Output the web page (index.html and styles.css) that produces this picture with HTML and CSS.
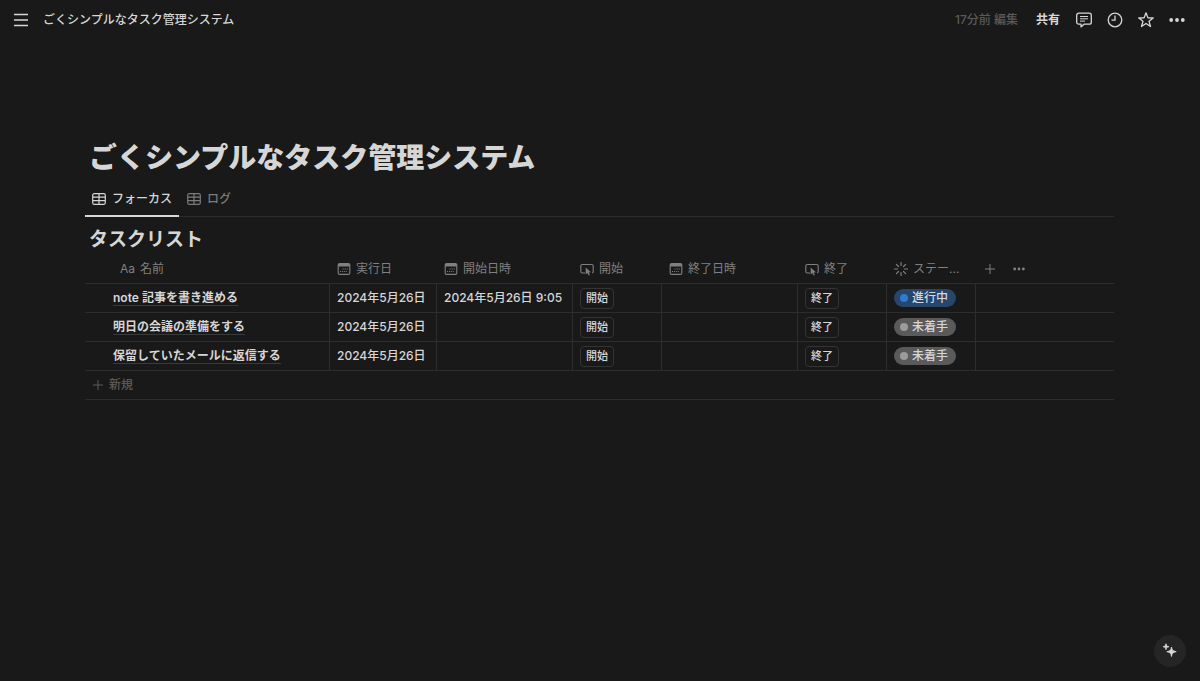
FILE: index.html
```html
<!DOCTYPE html>
<html lang="ja">
<head>
<meta charset="utf-8">
<meta name="viewport" content="width=device-width, initial-scale=1">
<title>ごくシンプルなタスク管理システム</title>
<link rel="stylesheet" href="styles.css">
</head>
<body>
<svg class="sprite" aria-hidden="true">
  <symbol id="i-table" viewBox="0 0 14 14"><path d="M2.200 1.700h9.600a1.500 1.500 0 0 1 1.500 1.500v7.600a1.500 1.500 0 0 1-1.500 1.500H2.200a1.500 1.500 0 0 1-1.500-1.500V3.200a1.500 1.500 0 0 1 1.500-1.500zM.7 5.200h12.600M.7 8.700h12.600M7 1.700v10.600" fill="none" stroke="currentColor" stroke-width="1.200"/></symbol>
  <symbol id="i-date" viewBox="0 0 14 14"><path d="M2.600 1.600h8.800a1.400 1.400 0 0 1 1.400 1.400v8a1.400 1.400 0 0 1-1.400 1.400H2.600A1.400 1.400 0 0 1 1.200 11V3a1.400 1.400 0 0 1 1.400-1.400z" fill="none" stroke="currentColor" stroke-width="1.100"/><path d="M1.200 2h11.600v2.500H1.200z" fill="currentColor"/><path d="M5.500 7h6M3 9.500h7" fill="none" stroke="currentColor" stroke-width="1.100" stroke-dasharray="1.100 1"/></symbol>
  <symbol id="i-button" viewBox="0 0 14 14"><path d="M5 11H2.300A1.500 1.500 0 0 1 .8 9.500V4a1.500 1.500 0 0 1 1.500-1.500h9.400A1.500 1.500 0 0 1 13.200 4v5.500a1.500 1.500 0 0 1-1 1.400" fill="none" stroke="currentColor" stroke-width="1.100"/><path d="M5.700 5.500v7l1.700-1.500 1.300 2.500 1.200-.6-1.200-2.500 2.200-.2z" fill="currentColor"/></symbol>
  <symbol id="i-status" viewBox="0 0 14 14"><path d="M7 .5v3M7 10.500v3M.5 7h3M10.500 7h3M2.400 2.400l2.100 2.100M9.500 9.500l2.100 2.100M2.400 11.600l2.100-2.100M9.500 4.500l2.100-2.100" fill="none" stroke="currentColor" stroke-width="1.200" stroke-linecap="round"/></symbol>
  <symbol id="i-plus" viewBox="0 0 12 12"><path d="M6 1v10M1 6h10" fill="none" stroke="currentColor"/></symbol>
  <symbol id="i-dots" viewBox="0 0 16 16"><circle cx="2.200" cy="8" r="1.900" fill="currentColor"/><circle cx="8" cy="8" r="1.900" fill="currentColor"/><circle cx="13.800" cy="8" r="1.900" fill="currentColor"/></symbol>
</svg>

<header class="topbar">
  <button class="icon-btn" aria-label="メニュー"><svg class="icon-16" viewBox="0 0 16 16"><path d="M1 2.500h14M1 8h14M1 13.500h14" stroke="currentColor" stroke-width="1.500"/></svg></button>
  <a class="crumb" href="#">ごくシンプルなタスク管理システム</a>
  <span class="edited">17分前 編集</span>
  <button class="share">共有</button>
  <nav class="actions" aria-label="ページ操作">
    <button class="icon-btn" aria-label="コメント"><svg class="icon-16" viewBox="0 0 16 16"><path d="M2.700 1.200h10.600a2 2 0 0 1 2 2v7a2 2 0 0 1-2 2H8l-3 2.700v-2.700H2.700a2 2 0 0 1-2-2v-7a2 2 0 0 1 2-2z" fill="none" stroke="currentColor" stroke-width="1.300" stroke-linejoin="round"/><path d="M4 4.500h8M4 6.800h8M4 9.100h5" stroke="currentColor"/></svg></button>
    <button class="icon-btn" aria-label="更新履歴"><svg class="icon-16" viewBox="0 0 16 16"><circle cx="8" cy="8" r="6.800" fill="none" stroke="currentColor" stroke-width="1.300"/><path d="M8 3.500V8.200H4.500" fill="none" stroke="currentColor" stroke-width="1.300"/></svg></button>
    <button class="icon-btn" aria-label="お気に入り"><svg class="icon-16" viewBox="0 0 16 16"><path d="M8 .8l1.900 5 5.300.2-4.200 3.300 1.500 5.200L8 11.500l-4.500 3 1.500-5.200L.8 6l5.300-.2z" fill="none" stroke="currentColor" stroke-width="1.300" stroke-linejoin="round"/></svg></button>
    <button class="icon-btn" aria-label="その他"><svg class="icon-16"><use href="#i-dots"/></svg></button>
  </nav>
</header>

<main class="page">
  <h1 class="title">ごくシンプルなタスク管理システム</h1>
  <div class="tabs" role="tablist">
    <button class="tab tab-active" role="tab" aria-selected="true"><svg class="icon-14"><use href="#i-table"/></svg>フォーカス</button>
    <button class="tab" role="tab" aria-selected="false"><svg class="icon-14"><use href="#i-table"/></svg>ログ</button>
  </div>
  <h2 class="subtitle">タスクリスト</h2>
  <table class="tasks">
    <colgroup><col class="c-name"><col class="c-day"><col class="c-time"><col class="c-btn"><col class="c-time"><col class="c-btn"><col class="c-btn"><col></colgroup>
    <thead>
      <tr>
        <th class="name-head"><span class="head"><span>Aa</span>名前</span></th>
        <th><span class="head"><svg class="icon-14"><use href="#i-date"/></svg>実行日</span></th>
        <th><span class="head"><svg class="icon-14"><use href="#i-date"/></svg>開始日時</span></th>
        <th><span class="head"><svg class="icon-14"><use href="#i-button"/></svg>開始</span></th>
        <th><span class="head"><svg class="icon-14"><use href="#i-date"/></svg>終了日時</span></th>
        <th><span class="head"><svg class="icon-14"><use href="#i-button"/></svg>終了</span></th>
        <th><span class="head"><svg class="icon-14"><use href="#i-status"/></svg>ステー...</span></th>
        <th><span class="head-tools"><button class="icon-btn" aria-label="列を追加"><svg class="icon-12"><use href="#i-plus"/></svg></button><button class="icon-btn" aria-label="列の設定"><svg class="icon-12"><use href="#i-dots"/></svg></button></span></th>
      </tr>
    </thead>
    <tbody>
      <tr>
        <td class="name"><a class="task" href="#">note 記事を書き進める</a></td><td>2024年5月26日</td><td>2024年5月26日 9:05</td>
        <td><button class="run">開始</button></td><td></td><td><button class="run">終了</button></td>
        <td><span class="status status-doing">進行中</span></td><td></td>
      </tr>
      <tr>
        <td class="name"><a class="task" href="#">明日の会議の準備をする</a></td><td>2024年5月26日</td><td></td>
        <td><button class="run">開始</button></td><td></td><td><button class="run">終了</button></td>
        <td><span class="status">未着手</span></td><td></td>
      </tr>
      <tr>
        <td class="name"><a class="task" href="#">保留していたメールに返信する</a></td><td>2024年5月26日</td><td></td>
        <td><button class="run">開始</button></td><td></td><td><button class="run">終了</button></td>
        <td><span class="status">未着手</span></td><td></td>
      </tr>
    </tbody>
  </table>
  <button class="new-row"><svg class="icon-12"><use href="#i-plus"/></svg>新規</button>
</main>

<button class="ai" aria-label="AI に質問"><svg class="icon-16" viewBox="0 0 16 16"><path d="M9.500 4c.5 3.200 1.200 4 4.700 4.700-3.500.7-4.200 1.500-4.700 4.800-.5-3.300-1.200-4.100-4.700-4.800C8.300 8 9 7.200 9.500 4zM4 .8c.3 2 .8 2.500 2.900 2.900C4.800 4.100 4.300 4.600 4 6.700 3.700 4.600 3.200 4.100 1.100 3.700 3.200 3.300 3.700 2.800 4 .8z" fill="currentColor" stroke="currentColor" stroke-width=".9"/></svg></button>
</body>
</html>
```

FILE: styles.css
```css
* { box-sizing: border-box; }

body {
  margin: 0;
  min-height: 100vh;
  background: #191919;
  color: #d6d6d6;
  font: 500 12px/18px Inter, "Noto Sans CJK JP", sans-serif;
}

button {
  display: inline-flex;
  align-items: center;
  margin: 0;
  padding: 0;
  border: 0;
  background: none;
  color: inherit;
  font: inherit;
}

a { color: inherit; text-decoration: none; }
svg { display: block; flex: none; }
.sprite { display: none; }
.icon-12 { width: 12px; height: 12px; }
.icon-14 { width: 14px; height: 14px; }
.icon-16 { width: 16px; height: 16px; }

.topbar {
  display: flex;
  align-items: center;
  height: 40px;
  padding: 0 15px 0 13px;
}
.crumb { margin-left: 14px; }
.edited { margin-left: auto; color: #5a5a5a; }
.share { margin-left: 18px; font-weight: 600; }
.actions { display: flex; gap: 15px; margin-left: 16px; }

.page { padding: 100px 86px 0 85px; }

.title {
  margin: 0;
  padding-left: 4px;
  font-size: 28px;
  line-height: 36px;
  font-weight: 800;
}

.tabs {
  display: flex;
  gap: 1px;
  margin-top: 6px;
  border-bottom: 1px solid #2b2b2b;
}
.tab {
  gap: 6px;
  height: 34px;
  padding: 0 7px;
  color: #7b7b7b;
}
.tab-active {
  color: #d6d6d6;
  box-shadow: 0 1px #d6d6d6, inset 0 -1px #d6d6d6;
}

.subtitle {
  margin: 9px 0 0;
  padding-left: 4px;
  font-size: 19px;
  line-height: 28px;
  font-weight: 700;
}

.tasks {
  width: 100%;
  table-layout: fixed;
  border-collapse: separate;
  border-spacing: 0;
}
.c-name { width: 245px; }
.c-day { width: 107px; }
.c-time { width: 136px; }
.c-btn { width: 89px; }

.tasks th, .tasks td {
  padding: 0 0 0 7px;
  border-bottom: 1px solid #2d2d2d;
  text-align: left;
  white-space: nowrap;
}
.tasks th { height: 30px; color: #808080; font-weight: 400; }
.tasks td { height: 29px; border-right: 1px solid #2d2d2d; }
.tasks td:last-child { border-right: 0; }
.tasks .name-head { padding-left: 35px; }
.tasks .name { padding-left: 28px; }

.head { display: flex; align-items: center; gap: 5px; }
.head-tools { display: flex; gap: 17px; padding-left: 1px; }

.task {
  border-bottom: 1px solid #3a3a3a;
  font-weight: 600;
}

.run {
  height: 21px;
  padding: 0 5px;
  border: 1px solid #343434;
  border-radius: 4px;
  font-size: 11px;
  vertical-align: middle;
}

.status {
  display: inline-flex;
  align-items: center;
  gap: 4px;
  height: 18px;
  padding: 0 8px 0 6px;
  border-radius: 9px;
  background: #5a5a5a;
  vertical-align: middle;
}
.status::before {
  width: 8px;
  height: 8px;
  border-radius: 50%;
  background: #9b9b9b;
  content: "";
}
.status-doing { background: #28456c; }
.status-doing::before { background: #2e7cd1; }

.new-row {
  width: 100%;
  height: 29px;
  gap: 5px;
  padding-left: 7px;
  border-bottom: 1px solid #2d2d2d;
  color: #5a5a5a;
}

.ai {
  position: fixed;
  right: 14px;
  bottom: 14px;
  justify-content: center;
  width: 32px;
  height: 32px;
  border-radius: 50%;
  background: #252525;
}
```
